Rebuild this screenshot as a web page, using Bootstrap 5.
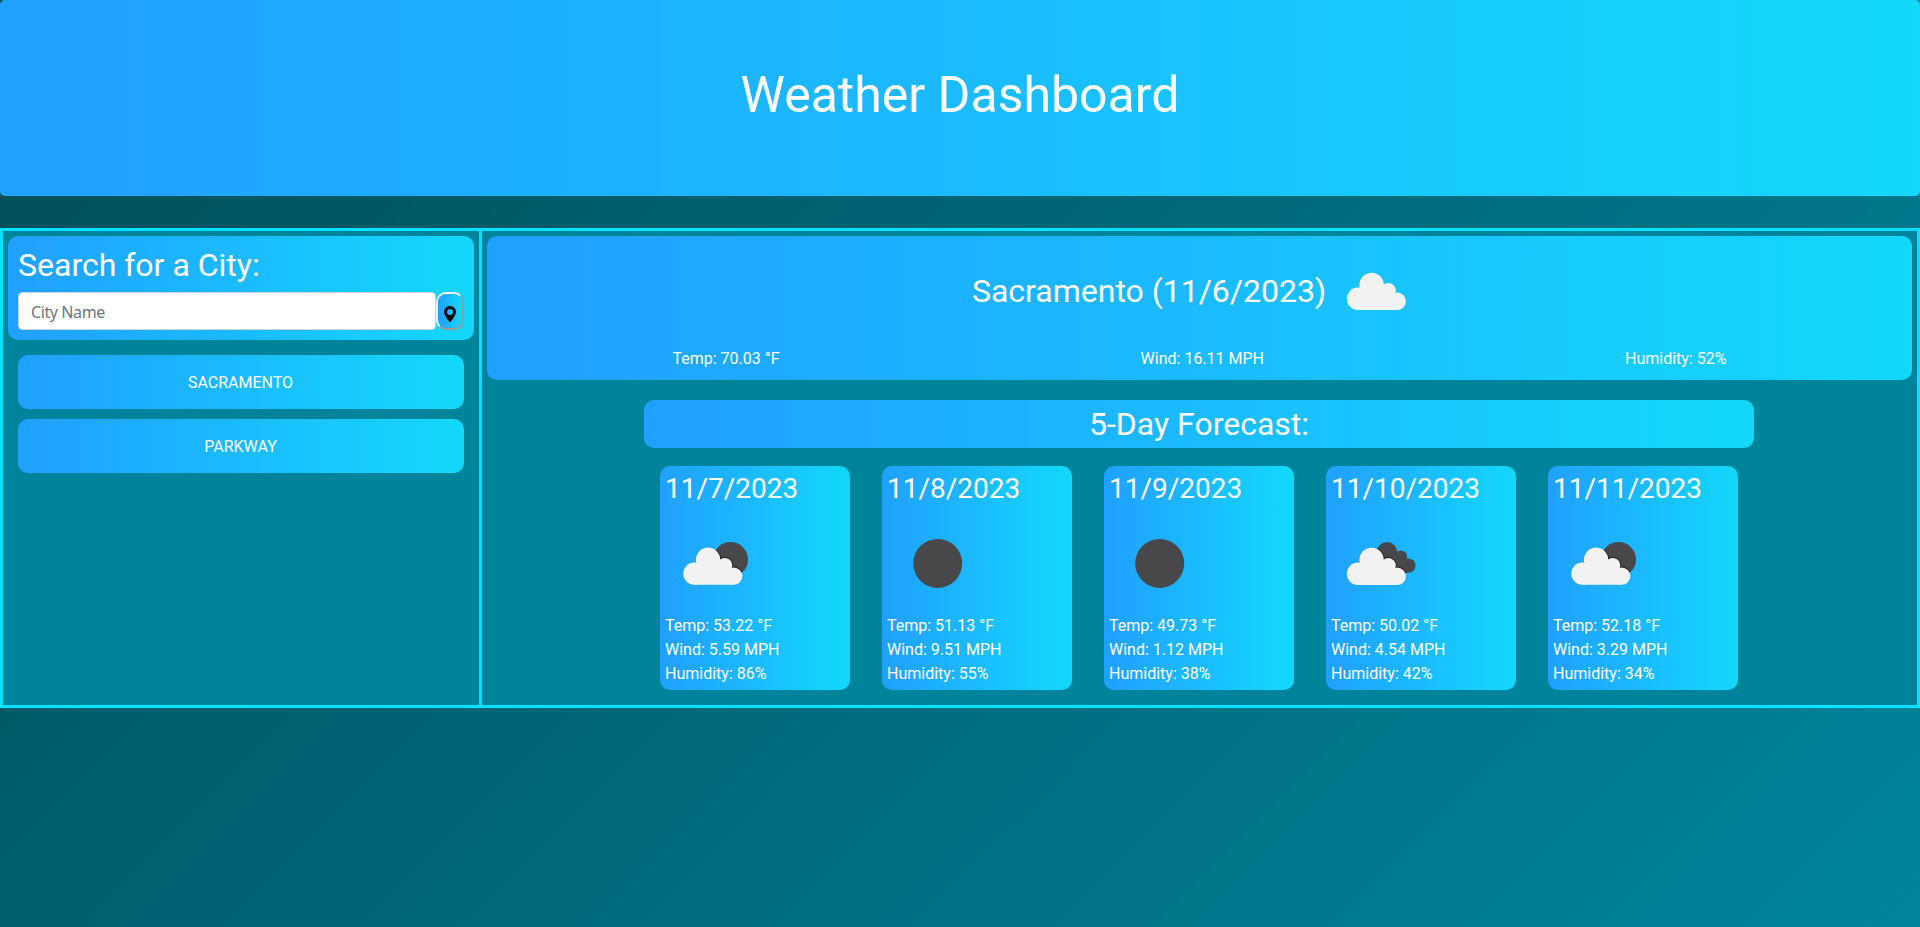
<!DOCTYPE html>
<html lang="en">
<head>
<meta charset="utf-8">
<meta name="viewport" content="width=device-width, initial-scale=1">
<title>Weather Dashboard</title>
<link rel="stylesheet" href="https://cdn.jsdelivr.net/npm/bootstrap@5.3.0/dist/css/bootstrap.min.css">
<style>
html{height:100%}
body{min-height:100%;font-family:Roboto,sans-serif;color:#fff;background:linear-gradient(135deg,#004d57,#00859d) no-repeat;line-height:1.5}
h1,h2,h3{font-weight:400;line-height:1.2}
h1{font-size:50px}h2{font-size:32px}h3{font-size:28px}
.sky{background:linear-gradient(to right,#20a0ff,#1bb8ff 45%,#18c2ff 60%,#13d8fa)}
.hero{padding:65px 32px 63px;border-radius:4.8px;margin-bottom:32px}
.frame{border:3px solid #00e1ff;background:#00849c;height:480px}
.sidebar{width:479px;border-right:3px solid #00e1ff;padding:5px}
.tile{border-radius:10px}
.search{padding:10px;height:104px}
.search .form-control{height:38px;width:418px;font-family:"Noto Sans",sans-serif;letter-spacing:-.4px;color:#495057;border:1px solid #ced4da;border-radius:4px;padding:7px 12px 5px}
.search .form-control::placeholder{color:#6c757d}
.pin{width:28px;height:38px;border:2px outset #efefef;padding:6px 0 0}
.cities{margin-top:15px;gap:10px;padding:0 10px}
.city{height:54px;border:0;color:#fff;text-transform:uppercase;padding:2px 1px 0 0}
.detail{padding:5px}
.now{padding:5px;height:144px}
.now svg,.day svg{width:100px;height:100px;display:block}
.now .headline{padding-right:1px}
.stats{margin-top:6px}
.forecast{width:1110px;margin:20px 0 0 157px}
.banner{height:48px;padding-top:5px}
.days{margin-top:18px;gap:32px;padding:0 16px}
.day{width:190px;height:224px;padding:6px 5px 4px}
.day svg{margin:-1px 0 1px}
</style>
</head>
<body>
<svg width="0" height="0" class="position-absolute">
<defs>
<g id="cloud"><circle cx="45.600" cy="44" r="12.200"/><circle cx="32" cy="57.800" r="11.200"/><circle cx="62.300" cy="49.600" r="7.500"/><circle cx="71.200" cy="60.300" r="8.700"/><path d="M32 50h10l20-2 9 10v11H32z"/></g>
<g id="small-cloud" transform="translate(18.200 2.600) scale(.83)"><use href="#cloud"/></g>
<clipPath id="moon-area"><circle cx="65.500" cy="46.500" r="17.500"/></clipPath>
<clipPath id="back-area"><circle cx="56" cy="39" r="10.100"/><circle cx="69.900" cy="43.700" r="6.200"/><circle cx="77.300" cy="52.700" r="7.200"/><path d="M45 44l25-1 7 8v9H45z"/></clipPath>
<symbol id="overcast" viewBox="0 0 100 100"><use href="#cloud" fill="#f2f2f2"/></symbol>
<symbol id="clear-night" viewBox="0 0 100 100"><circle cx="50.700" cy="50.400" r="24.500" fill="#48484a"/></symbol>
<symbol id="few-clouds" viewBox="0 0 100 100"><circle cx="65.500" cy="46.500" r="17.500" fill="#48484a"/><g clip-path="url(#moon-area)"><use href="#cloud" transform="translate(-2.500 2.800)" fill="#222" stroke="#222" stroke-width="2"/></g><use href="#cloud" transform="translate(-2.500 2.800)" fill="#f2f2f2"/></symbol>
<symbol id="broken-clouds" viewBox="0 0 100 100"><use href="#small-cloud" fill="#48484a"/><g clip-path="url(#back-area)"><use href="#cloud" transform="translate(-5 3)" fill="#222" stroke="#222" stroke-width="2"/></g><use href="#cloud" transform="translate(-5 3)" fill="#f2f2f2"/></symbol>
</defs>
</svg>
<header class="hero sky text-center"><h1 class="mb-2">Weather Dashboard</h1></header>
<main class="frame d-flex">
<aside class="sidebar flex-shrink-0">
<form class="search sky tile">
<h2 class="mb-2">Search for a City:</h2>
<div class="d-flex"><input class="form-control flex-shrink-0" type="text" placeholder="City Name"><button type="button" class="pin flex-shrink-0 sky tile d-flex align-items-center justify-content-center" aria-label="Search"><svg width="12" height="16" viewBox="0 0 12 16"><path fill-rule="evenodd" d="M6 0a6 6 0 0 1 6 6c0 2.700-3.600 7.500-5.300 9.700a.9.9 0 0 1-1.400 0C3.600 13.500 0 8.700 0 6a6 6 0 0 1 6-6zm0 3a3 3 0 1 0 0 6a3 3 0 1 0 0-6z"/></svg></button></div>
</form>
<div class="d-grid cities"><button class="city sky tile">Sacramento</button><button class="city sky tile">Parkway</button></div>
</aside>
<section class="detail flex-grow-1">
<div class="now sky tile">
<div class="headline d-flex align-items-center justify-content-center"><h2 class="m-0">Sacramento (11/6/2023)</h2><svg><use href="#overcast"/></svg></div>
<div class="d-flex justify-content-around stats"><span>Temp: 70.03 °F</span><span>Wind: 16.11 MPH</span><span>Humidity: 52%</span></div>
</div>
<div class="forecast">
<div class="banner sky tile text-center"><h2 class="m-0">5-Day Forecast:</h2></div>
<div class="days d-flex">
<div class="day sky tile"><h3 class="mb-2">11/7/2023</h3><svg><use href="#few-clouds"/></svg><div>Temp: 53.22 °F</div><div>Wind: 5.59 MPH</div><div>Humidity: 86%</div></div>
<div class="day sky tile"><h3 class="mb-2">11/8/2023</h3><svg><use href="#clear-night"/></svg><div>Temp: 51.13 °F</div><div>Wind: 9.51 MPH</div><div>Humidity: 55%</div></div>
<div class="day sky tile"><h3 class="mb-2">11/9/2023</h3><svg><use href="#clear-night"/></svg><div>Temp: 49.73 °F</div><div>Wind: 1.12 MPH</div><div>Humidity: 38%</div></div>
<div class="day sky tile"><h3 class="mb-2">11/10/2023</h3><svg><use href="#broken-clouds"/></svg><div>Temp: 50.02 °F</div><div>Wind: 4.54 MPH</div><div>Humidity: 42%</div></div>
<div class="day sky tile"><h3 class="mb-2">11/11/2023</h3><svg><use href="#few-clouds"/></svg><div>Temp: 52.18 °F</div><div>Wind: 3.29 MPH</div><div>Humidity: 34%</div></div>
</div>
</div>
</section>
</main>
<script src="https://cdn.jsdelivr.net/npm/bootstrap@5.3.0/dist/js/bootstrap.bundle.min.js"></script>
</body>
</html>
